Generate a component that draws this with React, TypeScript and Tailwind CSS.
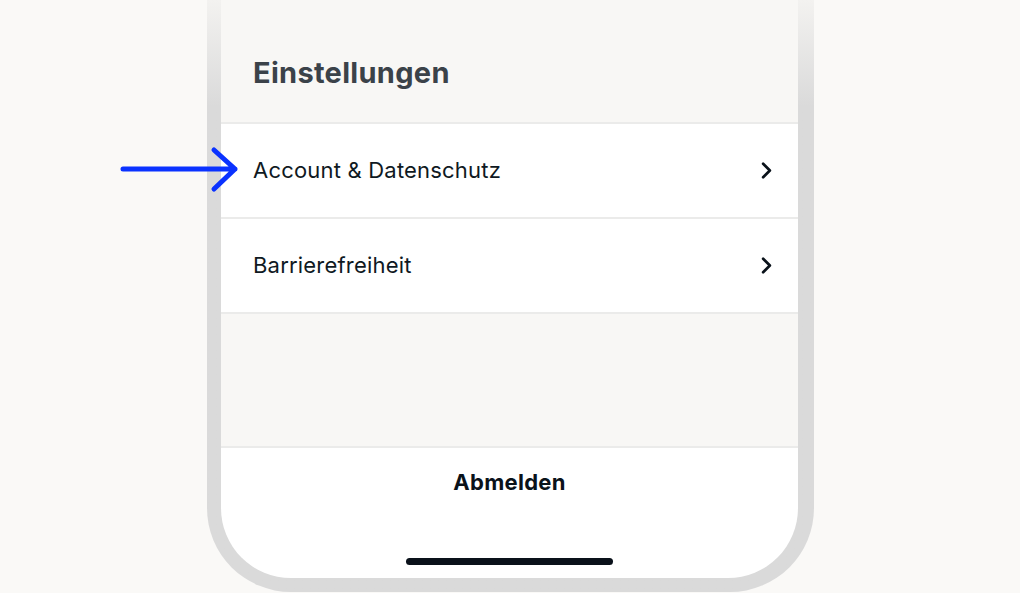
import { ChevronRight } from 'lucide-react';

const rows = ['Account & Datenschutz', 'Barrierefreiheit'];

function App() {
  return (
    <div className="h-[593px] w-[1020px] overflow-hidden bg-[#faf9f7] font-['Inter',sans-serif] text-[#0d1720]">
      <div className="relative flex">
        {/* Phone frame */}
        <div className="ml-[207px] h-[592px] w-[607px] rounded-b-[84px] bg-gradient-to-b from-[#f3f2f0] via-[#dadada] via-[18%] to-[#dadada] pl-[14px] pr-[16px] pb-[14px]">
          <div className="flex h-full flex-col overflow-hidden rounded-b-[70px] bg-white">
            <div className="flex h-[124px] shrink-0 items-center border-b-2 border-[#ebebea] bg-[#f8f7f5] px-[32px] pt-[24px]">
              <h1 className="text-[29px] font-bold tracking-[0.3px] text-[#3b4249]">Einstellungen</h1>
            </div>
            {rows.map((label) => (
              <div
                key={label}
                className="flex h-[95px] shrink-0 items-center justify-between border-b-2 border-[#ebebea] pl-[32px] pr-[18px]"
              >
                <span className="text-[22px] tracking-[0.2px] text-[#0f1922]">{label}</span>
                <ChevronRight size={27} strokeWidth={2.4} className="text-[#0a121a]" />
              </div>
            ))}
            <div className="h-[134px] shrink-0 border-b-2 border-[#ebebea] bg-[#f8f7f5]" />
            <div className="flex flex-1 flex-col items-center pt-[18px]">
              <span className="text-[22px] font-bold tracking-[0.3px] text-[#0a121a]">Abmelden</span>
              <div className="mt-[59px] h-[7px] w-[207px] rounded-full bg-[#0a111a]" />
            </div>
          </div>
        </div>

        {/* Pointer arrow */}
        <svg
          className="absolute left-[118px] top-[144px]"
          width="126"
          height="52"
          viewBox="0 0 126 52"
          fill="none"
        >
          <path
            d="M5 25H117M96 6L117 25L96 45"
            stroke="#0a32ff"
            strokeWidth="5"
            strokeLinecap="round"
            strokeLinejoin="round"
          />
        </svg>
      </div>
    </div>
  );
}

export default App;
